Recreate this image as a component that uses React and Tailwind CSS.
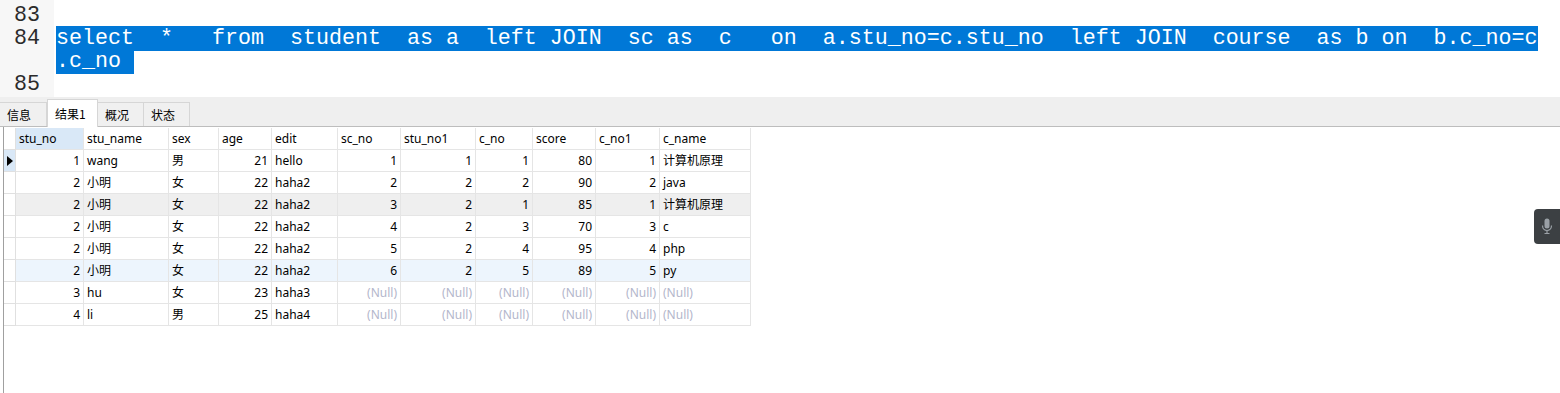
import React from "react";

const columns = [
  { key: "stu_no", w: 68, num: true },
  { key: "stu_name", w: 85 },
  { key: "sex", w: 50 },
  { key: "age", w: 53, num: true },
  { key: "edit", w: 66 },
  { key: "sc_no", w: 63, num: true },
  { key: "stu_no1", w: 75, num: true },
  { key: "c_no", w: 57, num: true },
  { key: "score", w: 63, num: true },
  { key: "c_no1", w: 64, num: true },
  { key: "c_name", w: 91 },
];

const rows = [
  [1, "wang", "男", 21, "hello", 1, 1, 1, 80, 1, "计算机原理"],
  [2, "小明", "女", 22, "haha2", 2, 2, 2, 90, 2, "java"],
  [2, "小明", "女", 22, "haha2", 3, 2, 1, 85, 1, "计算机原理"],
  [2, "小明", "女", 22, "haha2", 4, 2, 3, 70, 3, "c"],
  [2, "小明", "女", 22, "haha2", 5, 2, 4, 95, 4, "php"],
  [2, "小明", "女", 22, "haha2", 6, 2, 5, 89, 5, "py"],
  [3, "hu", "女", 23, "haha3", null, null, null, null, null, null],
  [4, "li", "男", 25, "haha4", null, null, null, null, null, null],
];

const tabs = ["信息", "结果1", "概况", "状态"];

function Editor() {
  return (
    <div className="flex h-[97px] bg-white font-['Liberation_Mono',monospace] text-[21.67px] leading-[23px]">
      <div className="w-[54px] shrink-0 bg-[#f7f7f7] pt-[4px] pr-[14px] text-right text-[#2b2b2b]">
        <div>83</div>
        <div>84</div>
        <div>&nbsp;</div>
        <div>85</div>
      </div>
      <div className="pl-[2px] pt-[4px] whitespace-pre">
        <div>&nbsp;</div>
        <div>
          <span className="bg-[#0078d7] text-white">
            {"select  *   from  student  as a  left JOIN  sc as  c   on  a.stu_no=c.stu_no  left JOIN  course  as b on  b.c_no=c"}
          </span>
        </div>
        <div>
          <span className="bg-[#0078d7] text-white">{".c_no "}</span>
        </div>
        <div>&nbsp;</div>
      </div>
    </div>
  );
}

function TabBar() {
  return (
    <div className="flex h-[30px] items-end border-b border-[#bdbdbd] bg-[#efefef] font-['Noto_Sans_CJK_SC',sans-serif] text-[12px] text-black">
      {tabs.map((t, i) =>
        i === 1 ? (
          <div
            key={t}
            className="-mb-px flex h-[28px] w-[51px] items-center border-x border-t border-[#d6d6d6] bg-white pl-[7px]"
          >
            {t}
          </div>
        ) : (
          <div
            key={t}
            className={`flex h-[24px] items-center border-t border-r border-[#d6d6d6] bg-[#f0f0f0] pl-[7px] ${
              i === 0 ? "w-[47px]" : "w-[46px]"
            }`}
          >
            {t}
          </div>
        )
      )}
    </div>
  );
}

function Cell({ col, value, head, highlight }) {
  const isNull = !head && value === null;
  const right = !head && col.num;
  return (
    <div
      className={`flex h-[22px] shrink-0 items-center border-r border-b border-[#e5e5e5] px-[3px] ${
        right ? "justify-end" : "justify-start"
      } ${highlight ? "bg-[#d9e8f7]" : ""} ${isNull ? "text-[#b3b6cb]" : "text-black"}`}
      style={{ width: col.w }}
    >
      <span className="whitespace-nowrap">{isNull ? "(Null)" : value}</span>
    </div>
  );
}

function Grid() {
  return (
    <div className="ml-[3px] flex-1 border-l border-[#a0a0a0] pt-px font-['Noto_Sans','Noto_Sans_CJK_SC',sans-serif] text-[12px]">
      <div className="flex">
        <div className="h-[22px] w-[12px] shrink-0 border-r border-b border-[#e0e0e0]" />
        {columns.map((c, i) => (
          <Cell key={c.key} col={c} value={c.key} head highlight={i === 0} />
        ))}
      </div>
      {rows.map((r, ri) => (
        <div
          key={ri}
          className={`flex w-max ${ri === 2 ? "bg-[#efefef]" : ri === 5 ? "bg-[#edf5fd]" : "bg-white"}`}
        >
          <div
            className={`flex h-[22px] w-[12px] shrink-0 items-center justify-center border-r border-b border-[#e0e0e0] ${
              ri === 0 ? "bg-[#d9e8f7]" : "bg-white"
            }`}
          >
            {ri === 0 && (
              <svg width="6" height="10" viewBox="0 0 6 10">
                <path d="M0 0 L6 5 L0 10 Z" fill="#000" />
              </svg>
            )}
          </div>
          {columns.map((c, ci) => (
            <Cell key={c.key} col={c} value={r[ci]} />
          ))}
        </div>
      ))}
    </div>
  );
}

export default function App() {
  return (
    <div className="relative flex h-[393px] w-[1560px] flex-col overflow-hidden bg-white">
      <Editor />
      <TabBar />
      <div className="flex flex-1">
        <Grid />
      </div>
      <div className="absolute right-0 top-[209px] flex h-[35px] w-[26px] items-center justify-center rounded-l-[4px] bg-[#3c4043]">
        <svg width="12" height="17" viewBox="0 0 12 17" fill="none">
          <rect x="3.5" y="0.5" width="5" height="10" rx="2.5" fill="#9aa0a6" />
          <path d="M1.5 7.5 C1.5 10.5 3.5 12.5 6 12.5 C8.5 12.5 10.5 10.5 10.5 7.5" stroke="#9aa0a6" strokeWidth="1.2" />
          <path d="M6 12.5 V15.5 M3.5 15.5 H8.5" stroke="#9aa0a6" strokeWidth="1.2" />
        </svg>
      </div>
    </div>
  );
}
